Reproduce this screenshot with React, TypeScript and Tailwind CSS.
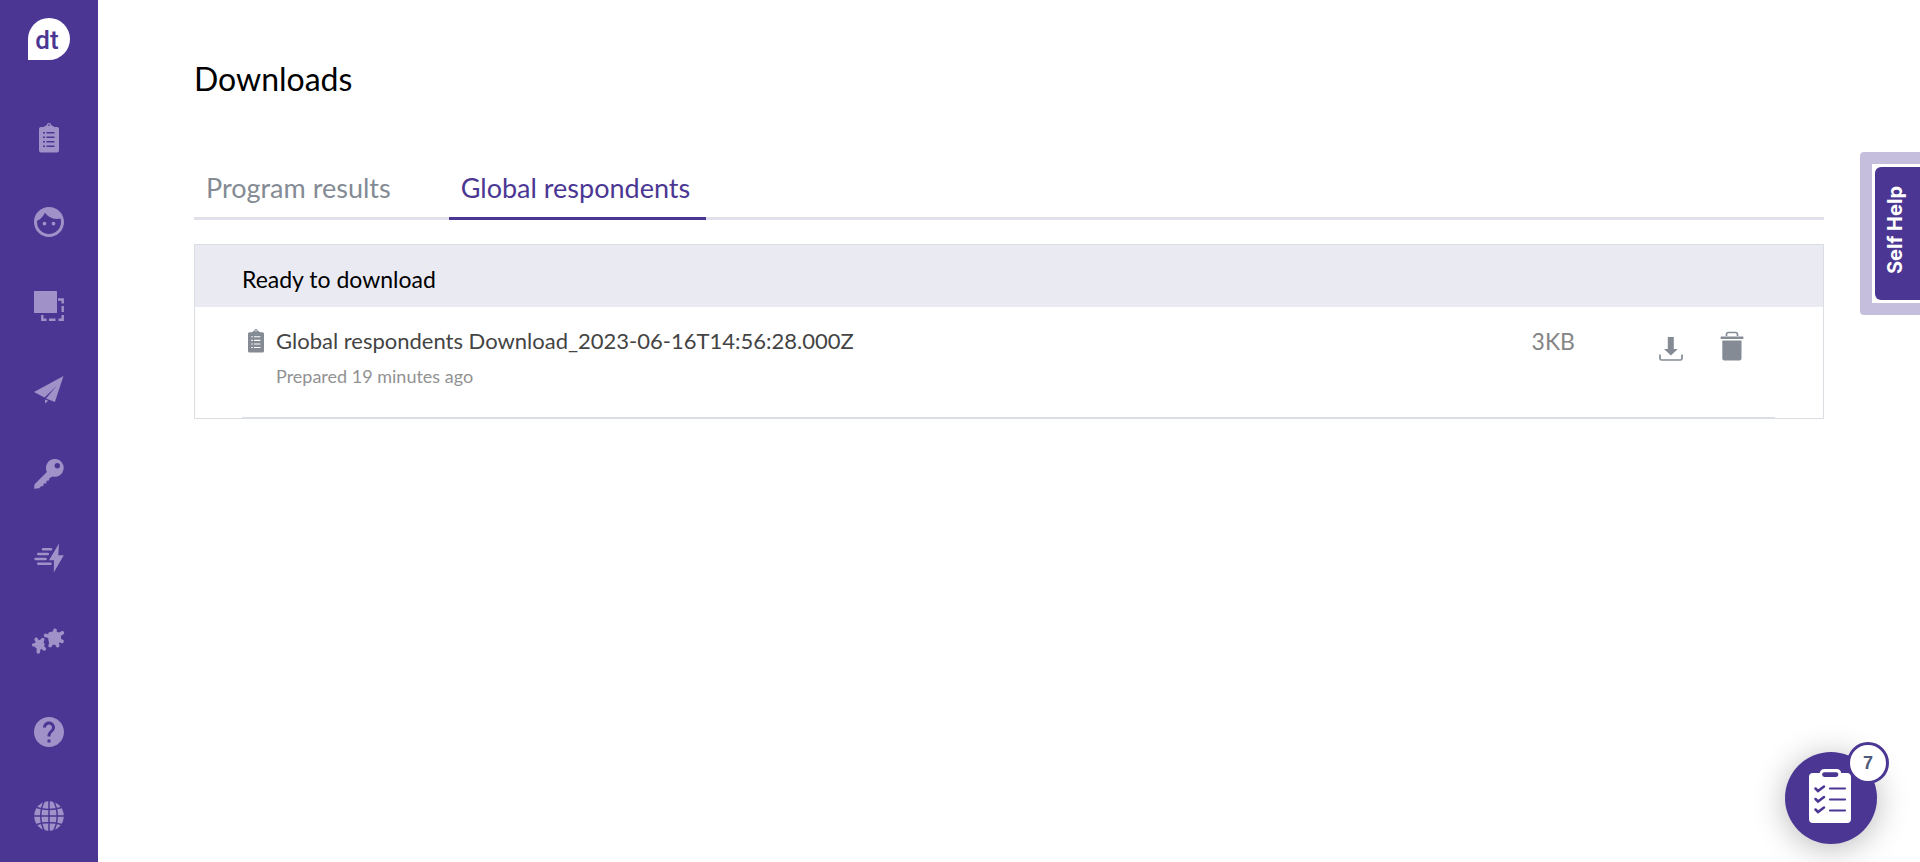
import type { ReactNode } from "react";
import { MdFace, MdHelp } from "react-icons/md";

const ClipboardIcon = ({ className }: { className: string }) => (
  <svg viewBox="0 0 20 30" className={className} fill="currentColor" aria-hidden="true">
    <path
      fillRule="evenodd"
      d="M10 0a2.2 2.2 0 0 1 2.2 2.1L15.500 4H18a2 2 0 0 1 2 2v21.500a2 2 0 0 1-2 2H2a2 2 0 0 1-2-2V6a2 2 0 0 1 2-2h2.500L7.800 2.100A2.200 2.200 0 0 1 10 0zM10 1.200a.9.9 0 1 0 0 1.800.9.9 0 0 0 0-1.800zM4 9h2v1.400H4zM7.500 9h8v1.400h-8zM4 13.500h2v1.400H4zM7.500 13.500h8v1.400h-8zM4 18h2v1.400H4zM7.500 18h8v1.400h-8zM4 22.500h2v1.400H4zM7.500 22.500h8v1.400h-8z"
    />
  </svg>
);

const LayersIcon = () => (
  <svg viewBox="0 0 30 30" className="size-[30px]" aria-hidden="true">
    <rect width="23" height="22" rx="0.5" fill="currentColor" />
    <path
      d="M24 8.500h4.700v4M28.700 15v6M28.700 24v4.700h-4.200M21.500 28.700h-6.500M12.500 28.700H8.300v-4.700"
      fill="none"
      stroke="currentColor"
      strokeWidth="2.400"
    />
  </svg>
);

const PlaneIcon = () => (
  <svg viewBox="0 0 30 28" className="h-7 w-[30px]" fill="currentColor" aria-hidden="true">
    <path d="M29.500 0 0 16l8.500 4.500zM29.500 0 8.500 20.500l2 1L22.500 10 12 22.600l8.900 3.400zM11 23.500v4l3.200-2.800z" />
  </svg>
);

const KeyIcon = () => (
  <svg viewBox="0 0 30 30" className="size-[30px]" fill="currentColor" aria-hidden="true">
    <path
      fillRule="evenodd"
      d="M21 0a8.900 8.900 0 1 1-2.800 17.400l-1.700 1.400-1 .2-.5 2.500-2.300.3-.5 2.600-2.500.2-.4 2.400-2.200.3-1.900 2-5.200.5.600-4.600L12.900 13A8.900 8.900 0 0 1 21 0zm2.300 4a2.700 2.700 0 1 0 0 5.400 2.700 2.700 0 0 0 0-5.400z"
    />
  </svg>
);

const BoltIcon = () => (
  <svg viewBox="0 0 30 30" className="size-[30px]" aria-hidden="true">
    <path d="M25 .5 15 17.200h5L19.800 29.500 29.800 12.300h-5.500z" fill="currentColor" />
    <path
      d="M9 6.300h8M4.200 11h9.600M1.600 16h10M4.200 20.800h12.300"
      fill="none"
      stroke="currentColor"
      strokeWidth="2.500"
      strokeLinecap="round"
    />
  </svg>
);

const PuzzleIcon = () => (
  <svg viewBox="0 1 34 28" className="h-7 w-[34px]" fill="currentColor" stroke="currentColor" aria-hidden="true">
    <path
      d="M17.500 6.500 22 5.500l5.500 1.500.5 6.500-3.500 3H18.500l-1-4z"
      strokeWidth="2.500"
      strokeLinejoin="round"
    />
    <path
      d="M22 10.500 23 3.500M22 10.500l8.300-4.600M22 10.500l8 3.900M22 10.500l3.700 8M22 10.500l-3.800 8M22 10.500l-8.300-2"
      strokeWidth="3.800"
      strokeLinecap="round"
    />
    <path d="m4.500 14 5.500-.3 2 4-3 4-5-1.500z" strokeWidth="1.500" strokeLinejoin="round" />
    <path
      d="M6.800 17 4.200 12.300M6.800 17l3.900-4.300M6.800 17l-5 1M6.800 17 6.300 25M6.800 17l5.500 4.800"
      strokeWidth="3.600"
      strokeLinecap="round"
    />
  </svg>
);

const GlobeIcon = () => (
  <svg viewBox="0 0 30 30" className="size-[30px]" aria-hidden="true">
    <circle cx="15" cy="15" r="14.800" fill="currentColor" />
    <path
      d="M15 0v30M0 15h30M10.500 0C5.500 9 5.500 21 10.500 30M19.500 0C24.500 9 24.500 21 19.500 30M2.500 6.500q12.500 4 25 0M2.500 23.500q12.500-4 25 0"
      fill="none"
      stroke="#4b3793"
      strokeWidth="1.500"
    />
  </svg>
);

const DownloadIcon = () => (
  <svg viewBox="0 0 24 24" className="size-6" aria-hidden="true">
    <path d="M8.800 0h6v12h4L11.900 18.500 5 12h3.800z" fill="currentColor" />
    <path d="M1 17.500v4a1.700 1.700 0 0 0 1.700 1.500h18.600a1.700 1.700 0 0 0 1.700-1.500v-4" fill="none" stroke="currentColor" strokeWidth="1.700" />
  </svg>
);

const TrashIcon = () => (
  <svg viewBox="0 0 24 30" className="h-[30px] w-6" aria-hidden="true">
    <path d="M2.300 9.500h19.200v18a2 2 0 0 1-2 2H4.300a2 2 0 0 1-2-2z" fill="currentColor" />
    <rect x="0.500" y="5.400" width="23" height="2.700" rx="1" fill="currentColor" />
    <path d="M6.500 5V3.200A1.700 1.700 0 0 1 8.200 1.500h7.600a1.700 1.700 0 0 1 1.700 1.700V5" fill="none" stroke="currentColor" strokeWidth="1.700" />
  </svg>
);

const ChecklistIcon = () => (
  <svg viewBox="0 0 42 54" className="h-[54px] w-[42px]" aria-hidden="true">
    <path
      fillRule="evenodd"
      fill="#fff"
      d="M15.500 0h12a5 5 0 0 1 4.800 4H38a4 4 0 0 1 4 4v42a4 4 0 0 1-4 4H4a4 4 0 0 1-4-4V8a4 4 0 0 1 4-4h6.700a5 5 0 0 1 4.800-4zm0 3.200a2.400 2.400 0 0 0 0 4.800h11.500a2.400 2.400 0 0 0 0-4.800z"
    />
    <path
      d="m6.500 19.500 2.500 2.500 6-4.500M6.500 30l2.500 2.500 6-4.500M6.500 40.500 9 43l6-4.500"
      fill="none"
      stroke="#4b3793"
      strokeWidth="2.500"
      strokeLinecap="round"
    />
    <path d="M21 19.500h15M21 30.500h15M21 41.500h15" stroke="#4b3793" strokeWidth="2.200" strokeLinecap="round" />
  </svg>
);

const NavItem = ({ label, children }: { label: string; children: ReactNode }) => (
  <a href="#" aria-label={label} className="flex h-[84px] w-full items-center justify-center text-[#a091c8]">
    {children}
  </a>
);

export default function App() {
  return (
    <div className="flex min-h-screen bg-white font-['Lato','Liberation_Sans',sans-serif] text-black">
      <nav aria-label="Main" className="flex w-[98px] shrink-0 flex-col items-center bg-[#4b3793]">
        <a href="#" aria-label="Home" className="mt-[18px] mb-9 flex size-[42px] items-center justify-center rounded-full rounded-bl-none bg-white">
          <span className="pt-0.5 pr-1 font-['Roboto',sans-serif] text-[26px] leading-8 font-medium text-[#4b3793]">dt</span>
        </a>
        <NavItem label="Surveys"><ClipboardIcon className="h-[30px] w-5" /></NavItem>
        <NavItem label="Respondents"><MdFace className="size-9" /></NavItem>
        <NavItem label="Templates"><LayersIcon /></NavItem>
        <NavItem label="Distribute"><PlaneIcon /></NavItem>
        <NavItem label="Access"><KeyIcon /></NavItem>
        <NavItem label="Automation"><BoltIcon /></NavItem>
        <NavItem label="Integrations"><PuzzleIcon /></NavItem>
        <div className="mt-auto w-full pb-1">
          <NavItem label="Help"><MdHelp className="size-9" /></NavItem>
          <NavItem label="Language"><GlobeIcon /></NavItem>
        </div>
      </nav>

      <main className="min-w-0 flex-1 px-24 pt-[59px]">
        <h1 className="text-[32px] leading-10">Downloads</h1>

        <div role="tablist" className="mt-[57px] flex border-b-[3px] border-[#e0e1ea] text-[27px] leading-8">
          <button role="tab" aria-selected="false" className="mr-[42px] -mb-[3px] border-b-[3px] border-transparent pt-4 pr-4 pb-[13px] pl-3 text-[#848b94]">
            Program results
          </button>
          <button role="tab" aria-selected="true" className="-mb-[3px] border-b-[3px] border-[#4b3793] pt-4 pr-4 pb-[13px] pl-3 text-[#4b3793]">
            Global respondents
          </button>
        </div>

        <section className="mt-6 border border-[#dadee2]">
          <h2 className="bg-[#eaeaf3] px-[47px] pt-[19px] pb-[13px] text-[23px] leading-[30px]">Ready to download</h2>
          <div className="mr-12 ml-[47px] flex h-[111px] items-start border-b border-[#dadee2] pt-[19px]">
            <ClipboardIcon className="mt-[3px] ml-1.5 h-6 w-4 shrink-0 text-[#848b94]" />
            <div className="ml-3">
              <p className="text-[22px] leading-[30px] text-[#444444]">Global respondents Download_2023-06-16T14:56:28.000Z</p>
              <p className="mt-2 text-lg leading-6 text-[#929292]">Prepared 19 minutes ago</p>
            </div>
            <span className="mr-[84px] ml-auto text-[23px] leading-[30px] text-[#858585]">3KB</span>
            <button aria-label="Download" className="mt-[11px] text-[#848b94]"><DownloadIcon /></button>
            <button aria-label="Delete" className="mt-[5px] mr-[31px] ml-[37px] text-[#848b94]"><TrashIcon /></button>
          </div>
        </section>
      </main>

      <div className="fixed top-[152px] right-0 rounded-l bg-[#c5bedd] py-3 pl-3">
        <div className="bg-white py-[3px] pl-[3px]">
          <button className="flex h-[133px] w-[45px] items-center justify-center rounded-l-md bg-[#4b3793] pr-1.5 pb-1.5 text-white">
            <span className="rotate-180 font-['Inter',sans-serif] text-xl leading-6 font-bold whitespace-nowrap [writing-mode:vertical-rl]">Self Help</span>
          </button>
        </div>
      </div>

      <button
        aria-label="Checklist, 7 items"
        className="fixed right-[43px] bottom-[18px] flex size-[92px] items-center justify-center rounded-full bg-[#4b3793] pr-0.5 pb-1 shadow-[0_4px_32px_rgba(0,0,0,0.28)]"
      >
        <ChecklistIcon />
        <span className="absolute -top-2.5 -right-3 flex size-[42px] items-center justify-center rounded-full border-[3px] border-[#4b3793] bg-white font-['Liberation_Sans',sans-serif] text-lg font-bold text-[#4d5a78]">
          7
        </span>
      </button>
    </div>
  );
}
